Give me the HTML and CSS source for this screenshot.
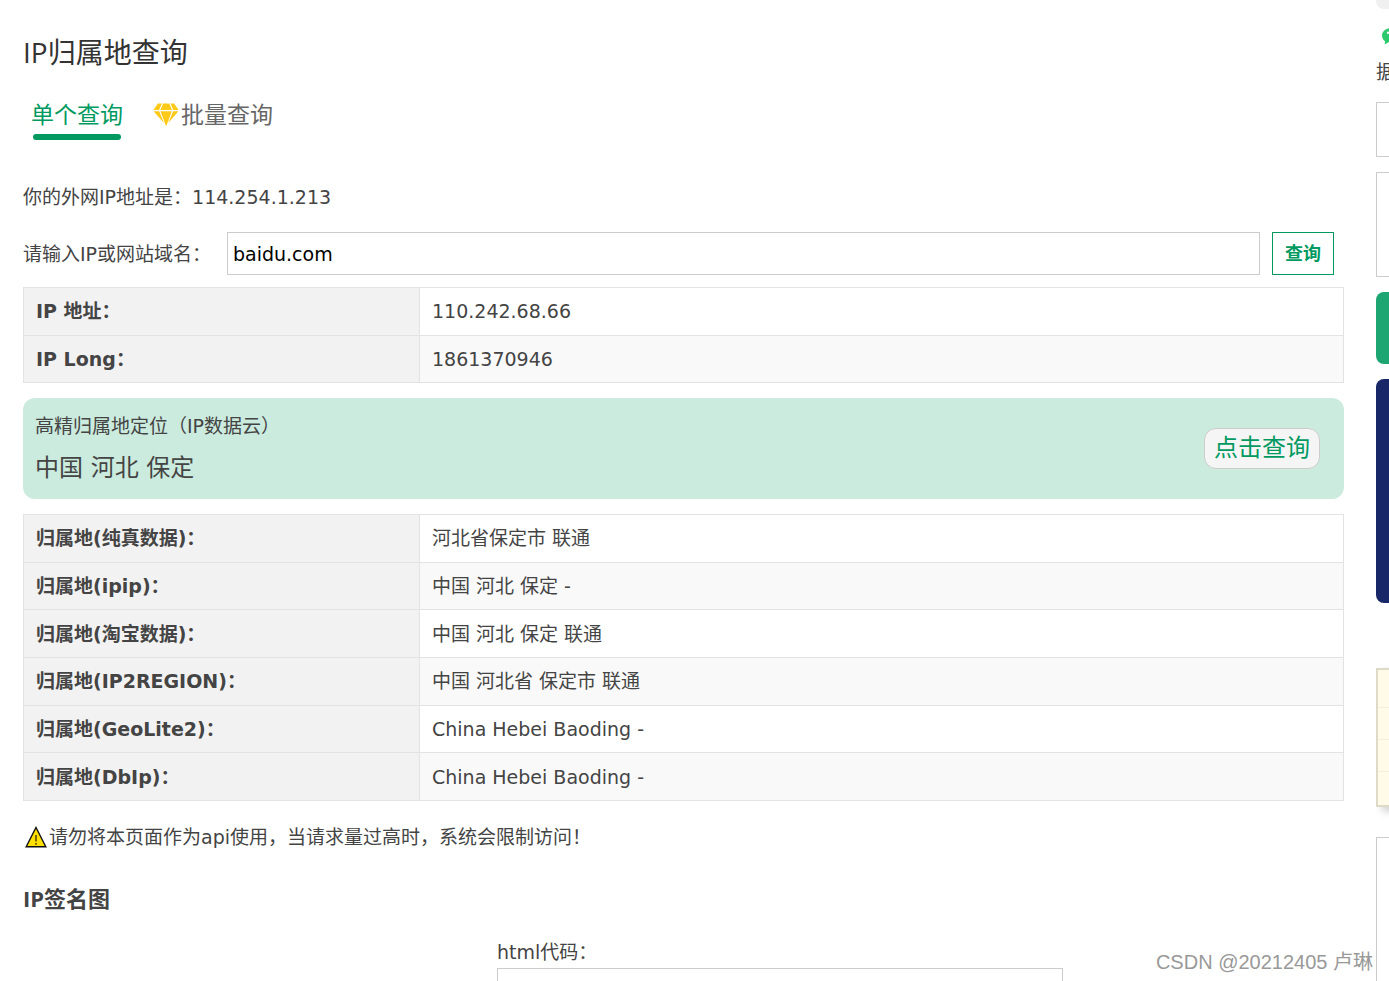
FILE: index.html
```html
<!DOCTYPE html>
<html lang="zh-CN">
<head>
<meta charset="utf-8">
<title>IP归属地查询</title>
<link rel="stylesheet" href="styles.css">
</head>
<body>
<div class="page">
  <main class="main">
    <h1 class="title">IP归属地查询</h1>
    <nav class="tabs">
      <a class="tab tab-active" href="#single">单个查询</a>
      <a class="tab" href="#batch"><svg class="gem" viewBox="0 0 26 24" aria-hidden="true"><g fill="#ffc917"><path d="M5 0.500H9L6 7H0.300z"/><path d="M10.200 0.500h6L19 7H7.300z"/><path d="M17.500 0.500H21L25.700 7H20.300z"/><path d="M0.500 8.300H6.200L11 20z"/><path d="M7.500 8.300H18.700L13.200 23.500z"/><path d="M20.100 8.300H25.500L15.200 20z"/></g></svg>批量查询</a>
    </nav>
    <p class="own-ip">你的外网IP地址是：114.254.1.213</p>
    <form class="search">
      <label for="host">请输入IP或网站域名：</label>
      <input class="host" id="host" type="text" value="baidu.com">
      <button class="submit" type="button">查询</button>
    </form>
    <table class="info info-ip">
      <tr><th scope="row">IP 地址：</th><td>110.242.68.66</td></tr>
      <tr><th scope="row">IP Long：</th><td>1861370946</td></tr>
    </table>
    <section class="precise">
      <div>
        <p class="precise-label">高精归属地定位（IP数据云）</p>
        <p class="precise-value">中国 河北 保定</p>
      </div>
      <button class="precise-button" type="button">点击查询</button>
    </section>
    <table class="info info-places">
      <tr><th scope="row">归属地(纯真数据)：</th><td>河北省保定市 联通</td></tr>
      <tr><th scope="row">归属地(ipip)：</th><td>中国 河北 保定 -</td></tr>
      <tr><th scope="row">归属地(淘宝数据)：</th><td>中国 河北 保定 联通</td></tr>
      <tr><th scope="row">归属地(IP2REGION)：</th><td>中国 河北省 保定市 联通</td></tr>
      <tr><th scope="row">归属地(GeoLite2)：</th><td>China Hebei Baoding -</td></tr>
      <tr><th scope="row">归属地(DbIp)：</th><td>China Hebei Baoding -</td></tr>
    </table>
    <p class="warning"><svg class="warn-icon" viewBox="0 0 22 22" aria-hidden="true"><path d="M11 1.500L20.800 20.800H1.200z" fill="#ffe000" stroke="#111" stroke-width="1.400"/><path d="M11 9v6.500M11 17v1.800" stroke="#332b00" stroke-width="1.300"/></svg>请勿将本页面作为api使用，当请求量过高时，系统会限制访问！</p>
    <h2 class="subtitle">IP签名图</h2>
    <div class="code">
      <label for="code">html代码：</label>
      <textarea class="code-box" id="code"></textarea>
    </div>
  </main>
  <aside class="side">
    <div class="stub"></div>
    <div class="share">
      <svg class="chat" viewBox="0 0 20 18" aria-hidden="true"><path d="M9 0C3.500 0 0 3.500 0 7.500c0 2.500 1.200 4.500 3 5.800l-.3 3.200 3.800-2.300c6 1.500 12-2 12-7.200 0-4-4-7-9.500-7z" fill="#2dc96d"/><circle cx="6" cy="4.800" r="1.200" fill="#fff"/></svg>
      <span class="share-text">据</span>
    </div>
    <div class="box box-small"></div>
    <div class="box box-tall"></div>
    <div class="banner banner-green"></div>
    <div class="banner banner-navy"></div>
    <div class="note"><div></div><div></div><div></div><div></div></div>
    <div class="box box-last"></div>
  </aside>
</div>
<div class="watermark">CSDN @20212405 卢琳</div>
</body>
</html>
```
FILE: styles.css
```css
* { box-sizing: border-box; }
body {
  margin: 0;
  height: 100vh;
  overflow: hidden;
  background: #fff;
  color: #444;
  font: 19px/28px "DejaVu Sans", "Noto Sans CJK SC", sans-serif;
}
p, h1, h2 { margin: 0; }
button, input, textarea { font: inherit; margin: 0; }

.page {
  display: grid;
  grid-template-columns: minmax(0, 1fr) 13px;
  column-gap: 32px;
  height: 100%;
  padding-left: 23px;
}
.main { min-width: 0; padding-top: 32px; }

.title {
  color: #333;
  font: 400 28px/40px "Open Sans", "Noto Sans CJK SC", sans-serif;
}
.tabs { display: flex; gap: 30px; padding: 26px 0 0 8px; }
.tab {
  display: flex;
  align-items: center;
  height: 42px;
  padding-bottom: 8px;
  color: #666;
  font-size: 23px;
  line-height: 34px;
  text-decoration: none;
}
.tab-active { position: relative; color: #009a61; }
.tab-active::after {
  content: "";
  position: absolute;
  left: 2px;
  right: 2px;
  bottom: 0;
  height: 6px;
  border-radius: 3px;
  background: #009a61;
}
.gem { width: 26px; height: 24px; margin-right: 2px; }

.own-ip { margin-top: 43px; }
.search {
  display: flex;
  align-items: center;
  gap: 12px;
  margin-top: 21px;
  padding-right: 10px;
}
.search label { width: 192px; white-space: nowrap; }
.host {
  flex: 1;
  min-width: 0;
  height: 43px;
  padding: 0 5px;
  border: 1px solid #ccc;
  color: #000;
}
.submit {
  width: 62px;
  height: 43px;
  padding: 0;
  border: 1px solid #009a61;
  background: #fff;
  color: #009a61;
  font-size: 18px;
  font-weight: 700;
}

.info {
  width: 100%;
  margin-top: 12px;
  border-collapse: collapse;
  table-layout: fixed;
}
.info-ip { height: 96px; }
.info-places { height: 287px; margin-top: 15px; }
.info th, .info td {
  padding: 0 12px;
  border: 1px solid #e3e3e3;
  text-align: left;
}
.info th { width: 30%; background: #f2f2f2; }
.info tr:nth-child(even) td { background: #f9f9f9; }

.precise {
  display: flex;
  align-items: center;
  justify-content: space-between;
  margin-top: 15px;
  padding: 12px 24px 13px 12px;
  border-radius: 12px;
  background: #cbebde;
}
.precise-label { line-height: 32px; }
.precise-value { margin-top: 8px; font-size: 24px; line-height: 36px; }
.precise-button {
  width: 116px;
  height: 41px;
  padding: 0;
  border: 1px solid #ccc;
  border-radius: 12px;
  background: #f5f5f5;
  color: #009a61;
  font-size: 24px;
}

.warning { display: flex; align-items: center; margin-top: 22px; }
.warn-icon { width: 22px; height: 22px; margin: 0 2px; }
.subtitle {
  margin-top: 30px;
  font: 700 22px/34px "Open Sans", "Noto Sans CJK SC", sans-serif;
}
.code {
  display: flex;
  flex-direction: column;
  width: 566px;
  margin: 23px 0 0 474px;
}
.code-box {
  height: 120px;
  margin-top: 2px;
  border: 1px solid #ccc;
  resize: none;
}

.side { display: flex; flex-direction: column; overflow: hidden; }
.side > * { flex: none; width: 300px; }
.stub { height: 9px; border-radius: 0 0 8px 8px; background: #f0f0f0; }
.share { display: flex; flex-direction: column; margin-top: 19px; }
.chat { width: 20px; height: 18px; margin-left: 6px; }
.share-text { margin-top: 10px; line-height: 32px; }
.box { border: 1px solid #ccc; }
.box-small { height: 55px; margin-top: 14px; }
.box-tall { height: 105px; margin-top: 15px; }
.banner { margin-top: 15px; border-radius: 8px; }
.banner-green { height: 72px; background: #1da672; }
.banner-navy { height: 224px; background: #172767; }
.note {
  height: 139px;
  margin-top: 65px;
  padding-top: 6px;
  border: 2px solid #dedac8;
  background: #fffbe8;
  box-shadow: 6px 4px 8px #ccc;
}
.note div { height: 32px; border-bottom: 1px solid #f3efdc; }
.note div:last-child { border: 0; }
.box-last { height: 200px; margin-top: 30px; }

.watermark {
  position: absolute;
  right: 16px;
  bottom: 5px;
  color: #999;
  font: 20px/28px "Liberation Sans", "Noto Sans CJK SC", sans-serif;
}
```
